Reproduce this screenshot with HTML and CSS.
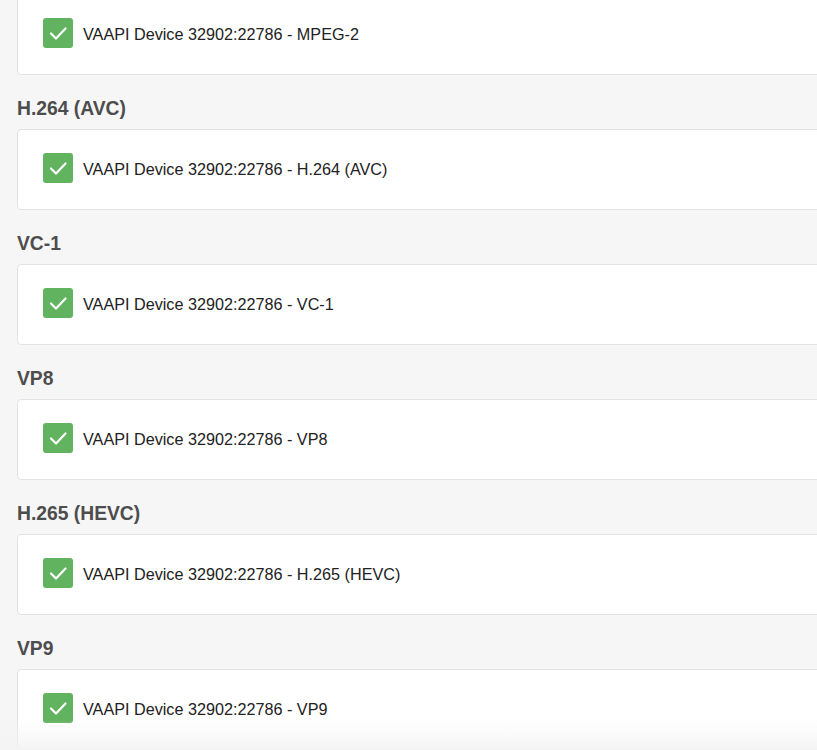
FILE: index.html
```html
<!DOCTYPE html>
<html lang="en">

<head>
    <meta charset="UTF-8">
    <meta name="viewport" content="width=device-width, initial-scale=1.0">
    <title>Hardware Decoding</title>
    <link rel="stylesheet" href="styles.css">
</head>

<body>
    <div class="codec-list">
        <div class="codec-card">
            <label class="check-row"><span class="check-box"><svg viewBox="0 0 30 30"><path d="M8 15.5l5 5 9.5-10"/></svg></span><span class="check-label">VAAPI Device 32902:22786 - MPEG-2</span></label>
        </div>

        <h3 class="codec-title">H.264 (AVC)</h3>
        <div class="codec-card">
            <label class="check-row"><span class="check-box"><svg viewBox="0 0 30 30"><path d="M8 15.5l5 5 9.5-10"/></svg></span><span class="check-label">VAAPI Device 32902:22786 - H.264 (AVC)</span></label>
        </div>

        <h3 class="codec-title">VC-1</h3>
        <div class="codec-card">
            <label class="check-row"><span class="check-box"><svg viewBox="0 0 30 30"><path d="M8 15.5l5 5 9.5-10"/></svg></span><span class="check-label">VAAPI Device 32902:22786 - VC-1</span></label>
        </div>

        <h3 class="codec-title">VP8</h3>
        <div class="codec-card">
            <label class="check-row"><span class="check-box"><svg viewBox="0 0 30 30"><path d="M8 15.5l5 5 9.5-10"/></svg></span><span class="check-label">VAAPI Device 32902:22786 - VP8</span></label>
        </div>

        <h3 class="codec-title">H.265 (HEVC)</h3>
        <div class="codec-card">
            <label class="check-row"><span class="check-box"><svg viewBox="0 0 30 30"><path d="M8 15.5l5 5 9.5-10"/></svg></span><span class="check-label">VAAPI Device 32902:22786 - H.265 (HEVC)</span></label>
        </div>

        <h3 class="codec-title">VP9</h3>
        <div class="codec-card">
            <label class="check-row"><span class="check-box"><svg viewBox="0 0 30 30"><path d="M8 15.5l5 5 9.5-10"/></svg></span><span class="check-label">VAAPI Device 32902:22786 - VP9</span></label>
        </div>
    </div>
    <div class="bottom-fade"></div>
</body>

</html>
```

FILE: styles.css
```css
body {
    font-family: 'Liberation Sans', Arial, sans-serif;
    margin: 0;
    padding: 0;
    background-color: #f6f6f6;
    overflow: hidden;
}

.codec-list {
    margin-top: -6px;
    padding-left: 17px;
    width: 840px;
}

.codec-title {
    margin: 0;
    padding: 22px 0 8px;
    height: 24px;
    line-height: 24px;
    font-size: 19.3px;
    font-weight: bold;
    color: #4d4d4d;
}

.codec-card {
    background-color: #fff;
    border: 1px solid #e3e3e3;
    border-radius: 4px;
    padding: 23px 25px 26px;
}

.check-row {
    display: flex;
    align-items: center;
    gap: 10px;
    height: 30px;
    font-size: 16.2px;
    color: #222;
}

.check-label {
    padding-top: 3px;
}

.check-box {
    width: 30px;
    height: 30px;
    border-radius: 3px;
    background-color: #62b35f;
    flex-shrink: 0;
}

.check-box svg {
    display: block;
    width: 30px;
    height: 30px;
    fill: none;
    stroke: #fff;
    stroke-width: 2.2;
    stroke-linecap: round;
    stroke-linejoin: round;
}

.bottom-fade {
    position: fixed;
    left: 0;
    right: 0;
    bottom: 0;
    height: 30px;
    background: linear-gradient(rgba(243, 243, 243, 0), rgba(243, 243, 243, 0.9));
}
```
